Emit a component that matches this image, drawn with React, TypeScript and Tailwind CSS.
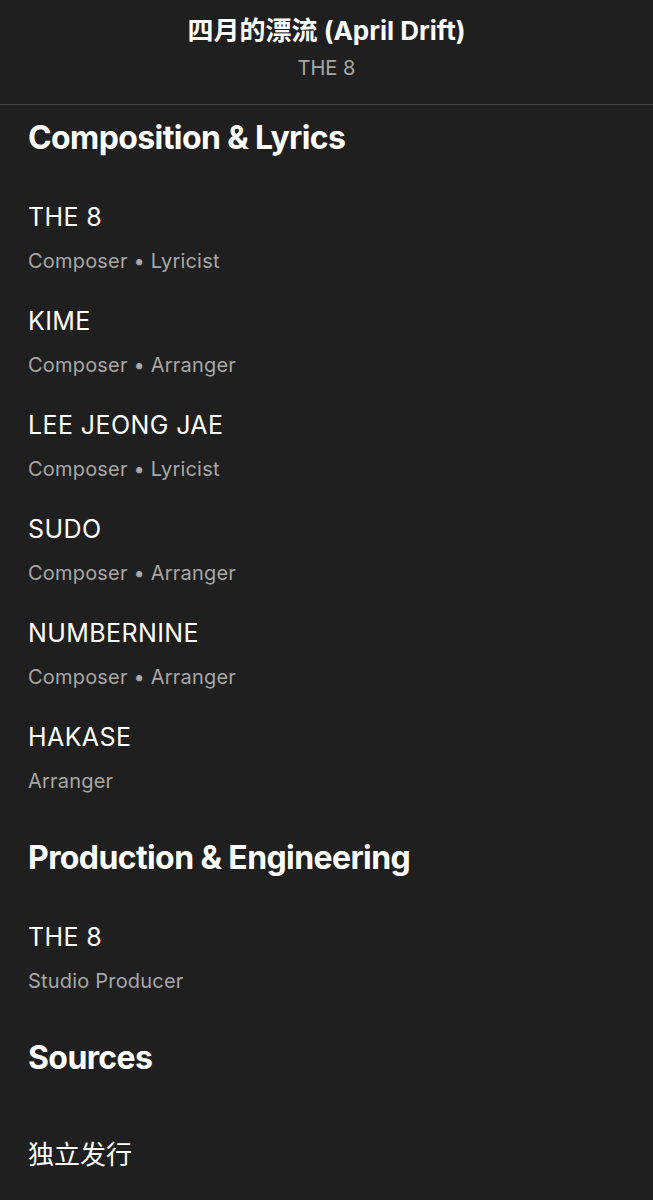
import React from "react";

interface Credit {
  name: string;
  roles: string[];
}

const composition: Credit[] = [
  { name: "THE 8", roles: ["Composer", "Lyricist"] },
  { name: "KIME", roles: ["Composer", "Arranger"] },
  { name: "LEE JEONG JAE", roles: ["Composer", "Lyricist"] },
  { name: "SUDO", roles: ["Composer", "Arranger"] },
  { name: "NUMBERNINE", roles: ["Composer", "Arranger"] },
  { name: "HAKASE", roles: ["Arranger"] },
];

const production: Credit[] = [{ name: "THE 8", roles: ["Studio Producer"] }];

const font = {
  fontFamily: "Inter, 'Noto Sans CJK SC', sans-serif",
};

const CreditRow: React.FC<{ credit: Credit }> = ({ credit }) => (
  <div className="flex flex-col pb-[30px]">
    <p className="text-[25px] leading-[32px] tracking-[0.4px] text-white">{credit.name}</p>
    <p className="mt-[14px] text-[20px] leading-[28px] tracking-[0.2px] text-[#a7a7a7]">
      {credit.roles.join(" • ")}
    </p>
  </div>
);

const SectionTitle: React.FC<{ title: string }> = ({ title }) => (
  <h2 className="mt-[13px] mb-[43px] text-[32px] leading-[40px] font-bold tracking-[-0.6px] text-white">
    {title}
  </h2>
);

export default function App() {
  return (
    <div className="min-h-[1200px] w-full bg-[#1f1f1f]" style={font}>
      {/* Header */}
      <div className="flex h-[105px] flex-col items-center border-b border-[#444444] pt-[15px]">
        <h1 className="text-[26px] leading-[32px] font-bold text-white">
          四月的漂流 (April Drift)
        </h1>
        <p className="mt-[7px] text-[20px] leading-[28px] text-[#a7a7a7]">THE 8</p>
      </div>

      <div className="px-[28px]">
        <SectionTitle title="Composition & Lyrics" />
        {composition.map((c, i) => (
          <CreditRow key={i} credit={c} />
        ))}

        <SectionTitle title="Production & Engineering" />
        {production.map((c, i) => (
          <CreditRow key={i} credit={c} />
        ))}

        <SectionTitle title="Sources" />
        <p className="mt-[61px] text-[26px] leading-[32px] text-white">独立发行</p>
      </div>
    </div>
  );
}
